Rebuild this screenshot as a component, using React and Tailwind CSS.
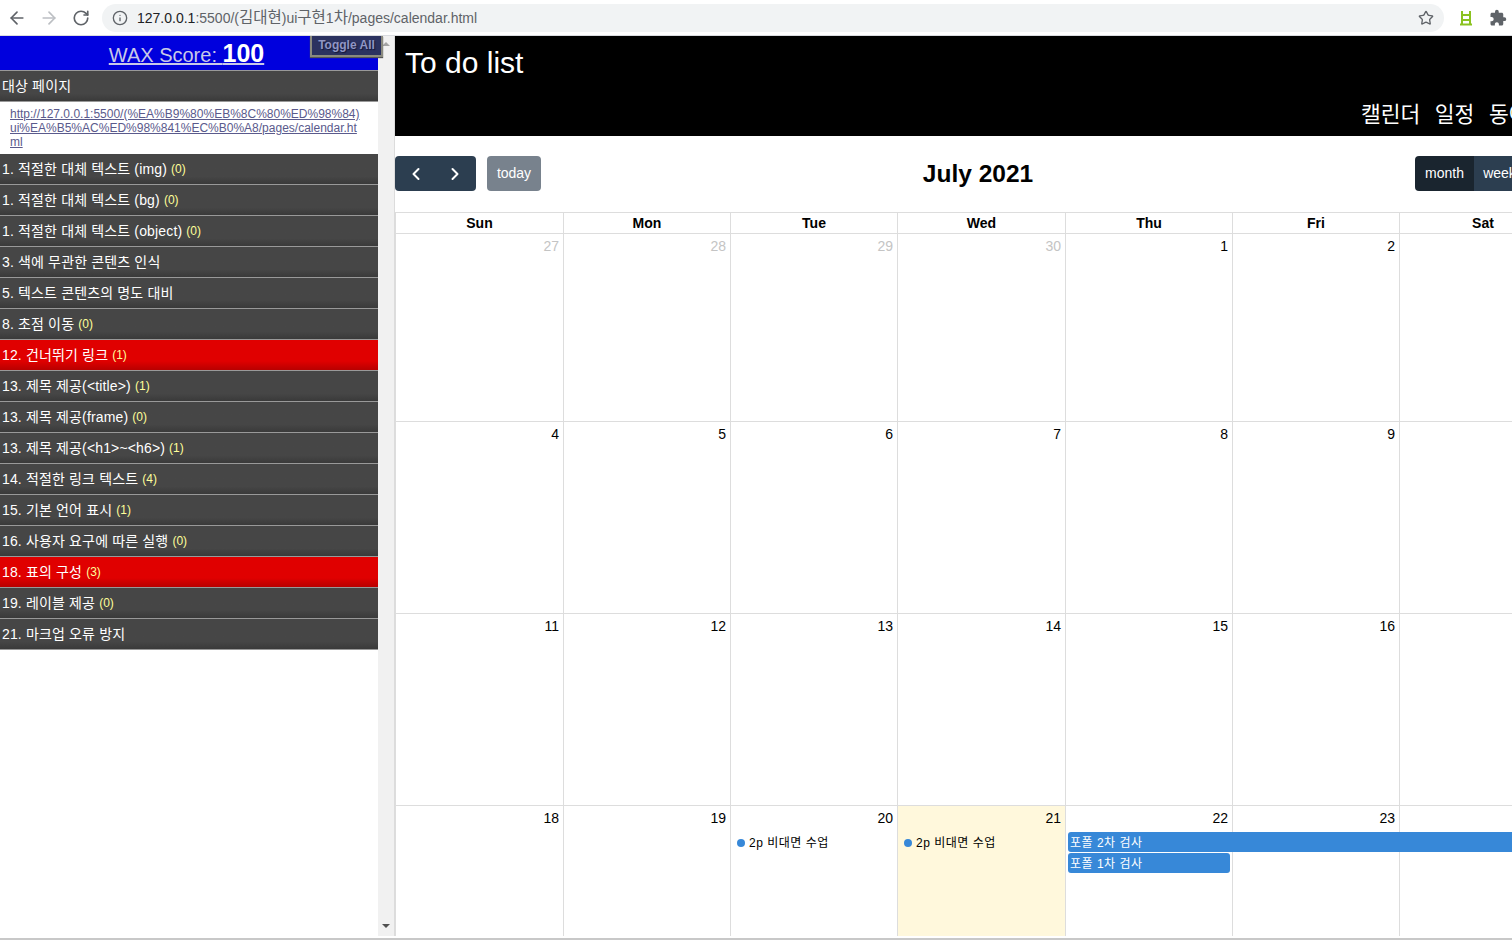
import { ArrowLeft, ArrowRight, RotateCw, Info, Star, ChevronLeft, ChevronRight } from "lucide-react";
import { MdExtension } from "react-icons/md";

const items = [
  { label: "1. 적절한 대체 텍스트 (img)", count: 0 },
  { label: "1. 적절한 대체 텍스트 (bg)", count: 0 },
  { label: "1. 적절한 대체 텍스트 (object)", count: 0 },
  { label: "3. 색에 무관한 콘텐츠 인식" },
  { label: "5. 텍스트 콘텐츠의 명도 대비" },
  { label: "8. 초점 이동", count: 0 },
  { label: "12. 건너뛰기 링크", count: 1, error: true },
  { label: "13. 제목 제공(<title>)", count: 1 },
  { label: "13. 제목 제공(frame)", count: 0 },
  { label: "13. 제목 제공(<h1>~<h6>)", count: 1 },
  { label: "14. 적절한 링크 텍스트", count: 4 },
  { label: "15. 기본 언어 표시", count: 1 },
  { label: "16. 사용자 요구에 따른 실행", count: 0 },
  { label: "18. 표의 구성", count: 3, error: true },
  { label: "19. 레이블 제공", count: 0 },
  { label: "21. 마크업 오류 방지" },
];

const days = ["Sun", "Mon", "Tue", "Wed", "Thu", "Fri", "Sat"];

const weeks = [
  { height: "h-[188px]", dates: [27, 28, 29, 30, 1, 2, ""], muted: 4 },
  { height: "h-[192px]", dates: [4, 5, 6, 7, 8, 9, ""], muted: 0 },
  { height: "h-[192px]", dates: [11, 12, 13, 14, 15, 16, ""], muted: 0 },
];

const cols = "grid grid-cols-[168px_167px_167px_168px_167px_167px_167px]";

function Dot() {
  return (
    <div className="mx-[2px] mt-[2px] flex h-5 items-center gap-[4px] pl-[4px] text-[12px] tracking-[0.5px] text-black">
      <span className="h-2 w-2 rounded-full bg-[#3788d8]" />
      <span>2p 비대면 수업</span>
    </div>
  );
}

function SideRow({ item }) {
  return (
    <div
      className={`flex h-[31px] items-center border-b border-[#999] pl-[2px] text-[14px] tracking-[0.15px] text-white ${
        item.error
          ? "bg-gradient-to-b from-[#e00000] from-70% to-[#b80000]"
          : "bg-gradient-to-b from-[#464646] from-75% to-[#3a3a3a]"
      }`}
    >
      <span>{item.label}</span>
      {item.count !== undefined && (
        <span className="ml-[4px] text-[12px] tracking-normal text-[#ffff99]">({item.count})</span>
      )}
    </div>
  );
}

export default function App() {
  return (
    <div className="relative flex h-[940px] w-[1512px] flex-col overflow-hidden bg-white font-['Liberation_Sans','Noto_Sans_CJK_KR',sans-serif]">
      {/* browser bar */}
      <div className="flex h-[36px] shrink-0 items-center border-b border-[#dadce0] bg-white">
        <div className="flex items-center gap-[12px] pl-[7px] text-[#5f6368]">
          <ArrowLeft size={20} strokeWidth={2} />
          <ArrowRight size={20} strokeWidth={2} className="text-[#bcbfc3]" />
          <RotateCw size={18} strokeWidth={2.2} className="ml-px" />
        </div>
        <div className="ml-[12px] flex h-[28px] w-[1342px] items-center rounded-full bg-[#f1f3f4] pl-[10px] pr-[10px]">
          <Info size={16} className="text-[#5f6368]" />
          <span className="ml-[9px] text-[14px] leading-[18px] text-[#5f6368]">
            <span className="text-[#202124]">127.0.0.1</span>:5500/(<span className="text-[15.5px]">김대현</span>)ui<span className="text-[15.5px]">구현</span>1<span className="text-[15.5px]">차</span>/pages/calendar.html
          </span>
          <Star size={16} className="ml-auto text-[#5f6368]" />
        </div>
        <svg className="ml-[15px]" width="14" height="16" viewBox="0 0 14 16" fill="none" stroke="#8bc220" strokeWidth="2">
          <path d="M3 1v14M11 1v14M3 5h8M3 10h8" />
          <path d="M1 14.5h12" />
        </svg>
        <MdExtension size={18} className="ml-[16px] text-[#5f6368]" />
      </div>

      <div className="flex min-h-0 flex-1">
        {/* wave sidebar */}
        <div className="w-[378px] shrink-0">
          <div className="h-[34px] bg-[#0000dd] pr-[5px] text-center text-[20px] leading-[34px] text-[#c8c8e8]">
            <a className="underline">
              WAX Score: <b className="text-[25px] text-white">100</b>
            </a>
          </div>
          <div className="flex h-[32px] items-center border-y border-[#999] bg-gradient-to-b from-[#464646] from-75% to-[#3a3a3a] pl-[2px] text-[14px] tracking-[0.15px] text-white">
            대상 페이지
          </div>
          <div className="h-[52px] break-all pl-[10px] pr-[16px] pt-[5px] text-[12px] leading-[14px] text-[#5a5a8c] underline">
            http://127.0.0.1:5500/(%EA%B9%80%EB%8C%80%ED%98%84)ui%EA%B5%AC%ED%98%841%EC%B0%A8/pages/calendar.html
          </div>
          {items.map((item, i) => (
            <SideRow key={i} item={item} />
          ))}
        </div>

        {/* sidebar scrollbar */}
        <div className="flex w-[17px] shrink-0 flex-col items-center justify-between border-r border-[#dcdcdc] bg-[#f1f1f1] py-[6px] pb-[8px]">
          <span className="h-0 w-0 border-x-[4px] border-b-[4px] border-x-transparent border-b-[#a3a3a3]" />
          <span className="h-0 w-0 border-x-[4px] border-t-[4px] border-x-transparent border-t-[#505050]" />
        </div>

        {/* page */}
        <div className="min-w-0 flex-1 overflow-hidden">
          <div className="w-[1172px]">
            <div className="flex h-[100px] flex-col justify-between bg-black pl-[10px] text-white">
              <h1 className="pt-[8px] text-[30px] leading-[38px]">To do list</h1>
              <div className="flex gap-[14.5px] pb-[8px] pl-[956px] text-[21.5px] leading-[26px]">
                <span className="whitespace-nowrap">캘린더</span>
                <span className="whitespace-nowrap">일정</span>
                <span className="whitespace-nowrap">동아리</span>
              </div>
            </div>

            <div className="flex h-[76px] items-start pt-[20px]">
              <div className="flex h-[35px] w-[81px] items-center justify-around rounded-[4px] bg-[#2c3e50] px-[2px] text-white">
                <ChevronLeft size={20} strokeWidth={2.4} />
                <ChevronRight size={20} strokeWidth={2.4} />
              </div>
              <div className="ml-[11px] flex h-[35px] w-[54px] items-center justify-center rounded-[4px] bg-[#78828d] text-[14px] text-white">
                today
              </div>
              <h2 className="w-[874px] text-center text-[24.5px] font-bold leading-[35px] text-black">July 2021</h2>
              <div className="flex h-[35px] text-[14px] text-white">
                <div className="flex w-[59px] items-center justify-center rounded-l-[4px] bg-[#1a252f]">month</div>
                <div className="flex w-[51px] items-center justify-center bg-[#2c3e50]">week</div>
              </div>
            </div>

            {/* calendar */}
            <div className="border-l border-[#ddd]">
              <div className={`${cols} h-[22px] border-y border-[#ddd]`}>
                {days.map((d) => (
                  <div key={d} className="border-r border-[#ddd] text-center text-[14px] font-bold leading-[21px] text-black">
                    {d}
                  </div>
                ))}
              </div>
              {weeks.map((w, i) => (
                <div key={i} className={`${cols} border-b border-[#ddd] ${w.height}`}>
                  {w.dates.map((d, j) => (
                    <div
                      key={j}
                      className={`border-r border-[#ddd] pr-[4px] pt-[4px] text-right text-[14px] leading-[16px] ${
                        j < w.muted ? "text-[#c4c4c4]" : "text-black"
                      }`}
                    >
                      {d}
                    </div>
                  ))}
                </div>
              ))}
              <div className={`${cols} h-[131px]`}>
                <div className="border-r border-[#ddd] pr-[4px] pt-[4px] text-right text-[14px] leading-[16px] text-black">18</div>
                <div className="border-r border-[#ddd] pr-[4px] pt-[4px] text-right text-[14px] leading-[16px] text-black">19</div>
                <div className="border-r border-[#ddd] pt-[4px] text-[14px] leading-[16px] text-black">
                  <div className="pr-[4px] text-right">20</div>
                  <div className="mt-[7px]">
                    <Dot />
                  </div>
                </div>
                <div className="border-r border-[#ddd] bg-[#fff8dc] pt-[4px] text-[14px] leading-[16px] text-black">
                  <div className="pr-[4px] text-right">21</div>
                  <div className="mt-[7px]">
                    <Dot />
                  </div>
                </div>
                <div className="border-r border-[#ddd] pt-[4px] text-[14px] leading-[16px] text-black">
                  <div className="pr-[4px] text-right">22</div>
                  <div className="relative z-10 ml-[2px] mt-[6px] flex h-5 w-[500px] items-center rounded-l-[3px] bg-[#3788d8] pl-[2px] pt-[2px] text-[12px] tracking-[0.5px] text-white">
                    포폴 2차 검사
                  </div>
                  <div className="mx-[2px] mt-[1px] flex h-5 items-center rounded-[3px] bg-[#3788d8] pl-[2px] pt-[2px] text-[12px] tracking-[0.5px] text-white">
                    포폴 1차 검사
                  </div>
                </div>
                <div className="border-r border-[#ddd] pr-[4px] pt-[4px] text-right text-[14px] leading-[16px] text-black">23</div>
                <div className="border-r border-[#ddd]" />
              </div>
            </div>
          </div>
        </div>
      </div>

      {/* window bottom edge */}
      <div className="h-[2px] shrink-0 bg-white" />
      <div className="h-[2px] shrink-0 bg-[#c8c8c8]" />

      <button className="absolute left-[310px] top-[36px] h-[21px] w-[73px] border-2 border-t-0 border-[#8a8a7e] bg-[#2b3260] pb-[3px] text-[12px] font-bold text-[#9096c4] shadow-[0_1px_1px_#555] [text-shadow:1px_1px_1px_#14183a]">
        Toggle All
      </button>
    </div>
  );
}
